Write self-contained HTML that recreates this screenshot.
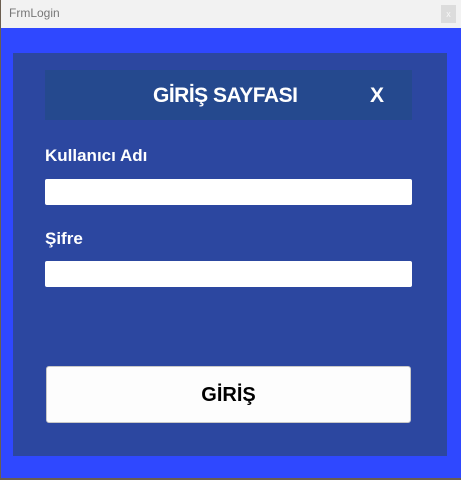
<!DOCTYPE html>
<html><head><style>
body{margin:0;width:461px;height:480px;overflow:hidden;background:#6b5e50;font-family:"Liberation Sans",sans-serif;position:relative}
div{position:absolute;box-sizing:border-box}
</style></head><body>
<div style="left:1px;top:0;width:460px;height:28px;background:#f2f2f2"></div>
<div style="left:9px;top:6px;font-size:12px;color:#777">FrmLogin</div>
<div style="left:441px;top:5px;width:15px;height:18px;background:#dcdcdc;color:#f8f8f8;font-size:9px;text-align:center;line-height:18px">x</div>
<div style="left:1px;top:28px;width:460px;height:450px;background:#2f48ff"></div>
<div style="left:13px;top:53px;width:434px;height:403px;background:#2c47a0"></div>
<div style="left:45px;top:70px;width:367px;height:50px;background:#25498e"></div>
<div style="left:153px;top:84px;color:#fff;font-weight:bold;font-size:21px;letter-spacing:-0.5px">GİRİŞ SAYFASI</div>
<div style="left:370px;top:84px;color:#fff;font-weight:bold;font-size:21px">X</div>
<div style="left:45px;top:146px;color:#fff;font-weight:bold;font-size:17px">Kullanıcı Adı</div>
<div style="left:45px;top:179px;width:367px;height:26px;background:#fff;border-radius:2px"></div>
<div style="left:45px;top:229px;color:#fff;font-weight:bold;font-size:17px">Şifre</div>
<div style="left:45px;top:261px;width:367px;height:26px;background:#fff;border-radius:2px"></div>
<div style="left:46px;top:366px;width:365px;height:57px;background:#fdfdfd;border:1px solid #c8c8c8;border-radius:3px;text-align:center;line-height:57px;font-weight:bold;font-size:20px;color:#000">GİRİŞ</div>
</body></html>
